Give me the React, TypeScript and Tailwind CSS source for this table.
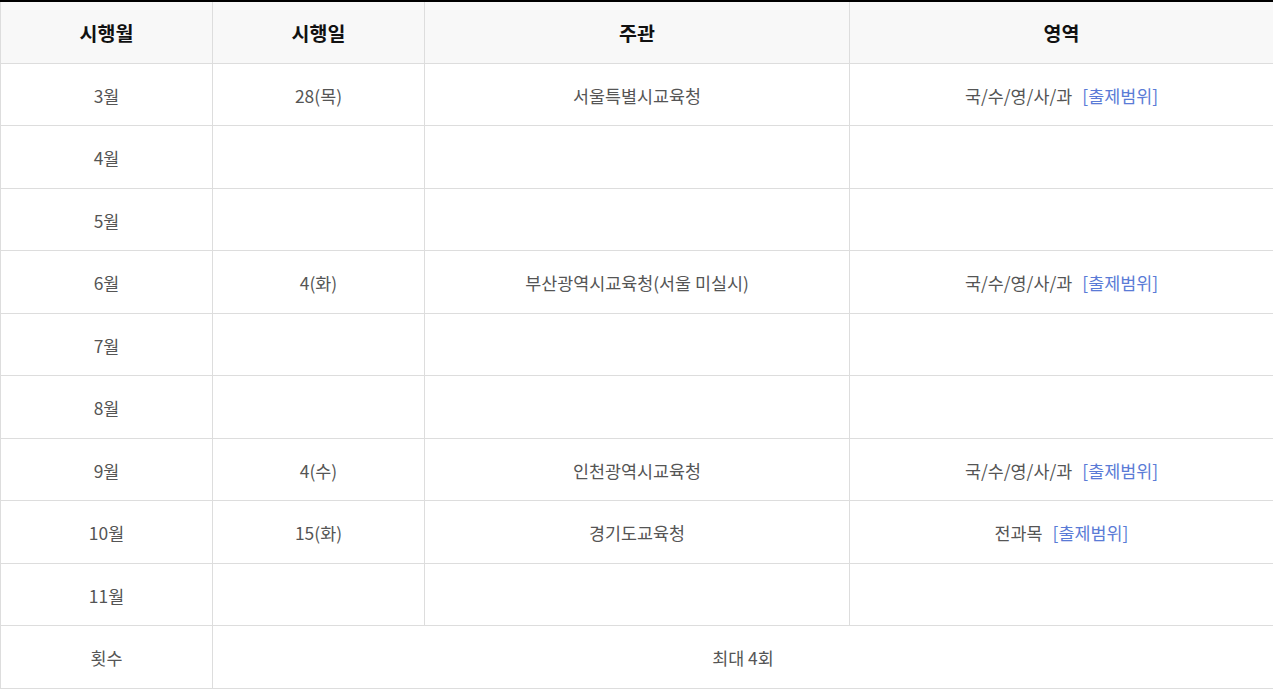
import React from 'react';

type Row = {
  month: string;
  date?: string;
  host?: string;
  area?: string;
};

const rows: Row[] = [
  { month: '3월', date: '28(목)', host: '서울특별시교육청', area: '국/수/영/사/과' },
  { month: '4월' },
  { month: '5월' },
  { month: '6월', date: '4(화)', host: '부산광역시교육청(서울 미실시)', area: '국/수/영/사/과' },
  { month: '7월' },
  { month: '8월' },
  { month: '9월', date: '4(수)', host: '인천광역시교육청', area: '국/수/영/사/과' },
  { month: '10월', date: '15(화)', host: '경기도교육청', area: '전과목' },
  { month: '11월' },
];

const cell = 'border border-[#dddddd] text-center align-middle';
const td = `${cell} pt-[3px]`;

export default function App() {
  return (
    <div className="bg-white w-[1273px] h-[691px] overflow-hidden font-['Noto_Sans_CJK_KR','Noto_Sans',sans-serif]">
      <table className="w-[1273px] border-collapse table-fixed border-t-2 border-t-black">
        <colgroup>
          <col className="w-[212px]" />
          <col className="w-[212px]" />
          <col className="w-[425px]" />
          <col className="w-[424px]" />
        </colgroup>
        <thead>
          <tr className="h-[62px] bg-[#f8f8f8]">
            {['시행월', '시행일', '주관', '영역'].map((h) => (
              <th key={h} className={`${cell} border-t-black text-[19.5px] font-bold text-[#111111]`}>
                {h}
              </th>
            ))}
          </tr>
        </thead>
        <tbody className="text-[17.4px] text-[#555555]">
          {rows.map((r) => (
            <tr key={r.month} className="h-[62.5px]">
              <td className={td}>{r.month}</td>
              <td className={td}>{r.date}</td>
              <td className={td}>{r.host}</td>
              <td className={td}>
                {r.area && (
                  <>
                    {r.area}
                    <a className="ml-[10px] text-[#5a7bd6]">[출제범위]</a>
                  </>
                )}
              </td>
            </tr>
          ))}
          <tr className="h-[62.5px]">
            <td className={td}>횟수</td>
            <td className={td} colSpan={3}>
              최대 4회
            </td>
          </tr>
        </tbody>
      </table>
    </div>
  );
}
